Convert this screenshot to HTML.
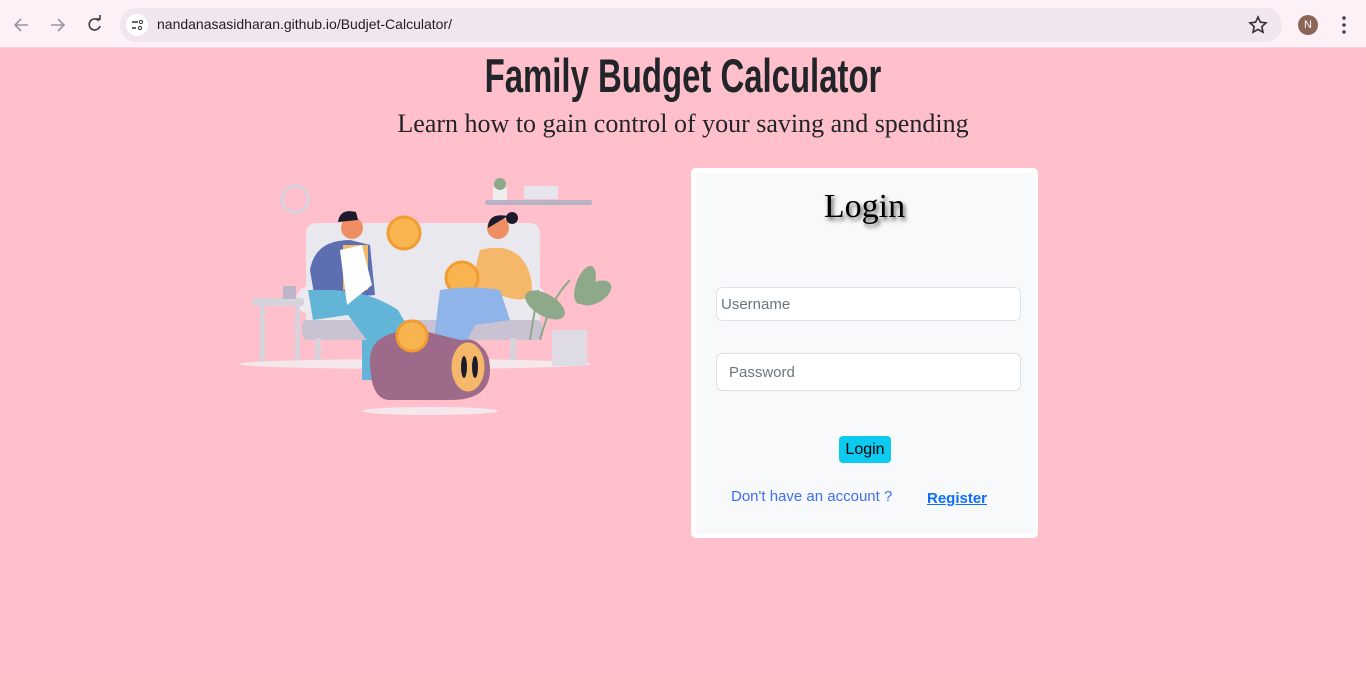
<!DOCTYPE html>
<html><head><meta charset="utf-8"><style>
*{margin:0;padding:0;box-sizing:border-box}
body{width:1366px;height:673px;overflow:hidden;background:#ffc0cb;font-family:"Liberation Sans",sans-serif;position:relative}
.bar{position:absolute;left:0;top:0;width:1366px;height:48px;background:#fdf1f7;border-bottom:1px solid #f0d6e2}
.url{position:absolute;left:120px;top:8px;width:1162px;height:34px;border-radius:17px;background:#f1e5ee}
.url span{position:absolute;left:37px;top:8px;font-size:14px;color:#1f1f1f}
h1{position:absolute;left:0;width:1366px;top:48px;text-align:center;font-family:"Liberation Sans",sans-serif;font-weight:bold;font-size:47px;color:#212529;transform:scaleX(0.7);transform-origin:683px 0}
.sub{position:absolute;left:0;width:1366px;top:109px;text-align:center;font-family:"Liberation Serif",serif;font-size:26px;color:#212529}
.card{position:absolute;left:691px;top:168px;width:347px;height:370px;background:#fff;border-radius:5px}
.in{position:absolute;left:5px;top:5px;width:337px;height:360px;background:#f8f9fa}
.lt{position:absolute;left:0;width:100%;top:15px;text-align:center;font-family:"Liberation Serif",serif;font-size:34px;color:#000;text-shadow:2px 3px 4px #555}
.inp{position:absolute;left:20px;width:305px;background:#fff;border:1px solid #dee2e6;border-radius:6px;font-size:15px;color:#6c757d}
.btn{position:absolute;left:143px;top:263px;width:52px;height:27px;background:#0dcaf0;border-radius:4px;font-size:16px;color:#000;text-align:center;line-height:27px}
.a1{position:absolute;left:35px;top:315px;font-size:15px;color:#3d6ef5}
.a2{position:absolute;left:231px;top:317px;font-size:15px;color:#0d6efd;font-weight:bold;text-decoration:underline}
</style></head><body>
<div class="bar">
<svg width="120" height="48" style="position:absolute;left:0;top:0">
<path d="M28 25H15M21 19l-6 6 6 6" stroke="#999" stroke-width="1.6" fill="none"/>
<path d="M51 25h13M58 19l6 6-6 6" stroke="#999" stroke-width="1.6" fill="none"/>
<path d="M99 21a5.5 5.5 0 1 0 1 5" stroke="#444" stroke-width="1.7" fill="none"/><path d="M96 19h4v-4" stroke="#444" stroke-width="1.7" fill="none"/>
</svg>
<div class="url"><svg width="30" height="34" style="position:absolute;left:4px;top:0"><circle cx="13" cy="17" r="11" fill="#fff"/><path d="M8 14h6M8 20h4" stroke="#333" stroke-width="1.5"/><circle cx="17" cy="14" r="1.6" stroke="#333" fill="none"/><circle cx="16" cy="20" r="1.6" stroke="#333" fill="none"/></svg><span>nandanasasidharan.github.io/Budjet-Calculator/</span>
<svg width="20" height="20" style="position:absolute;left:1128px;top:7px"><path d="M10 2l2.4 5.2 5.6.6-4.2 3.8 1.2 5.6L10 14.4 5 17.2l1.2-5.6L2 7.8l5.6-.6z" stroke="#333" stroke-width="1.6" fill="none"/></svg></div>
<div style="position:absolute;left:1298px;top:15px;width:20px;height:20px;border-radius:50%;background:#8d6556;color:#fff;font-size:11px;text-align:center;line-height:20px">N</div>
<svg width="6" height="20" style="position:absolute;left:1341px;top:15px"><circle cx="3" cy="3" r="1.8" fill="#444"/><circle cx="3" cy="10" r="1.8" fill="#444"/><circle cx="3" cy="17" r="1.8" fill="#444"/></svg>
</div>
<h1>Family Budget Calculator</h1>
<div class="sub">Learn how to gain control of your saving and spending</div>
<svg width="380" height="250" viewBox="0 0 380 250" style="position:absolute;left:240px;top:170px">
<circle cx="55" cy="29" r="13" fill="none" stroke="#d6d3dd" stroke-width="3"/>
<rect x="245" y="30" width="107" height="5" rx="2" fill="#b8b2c6"/>
<rect x="253" y="17" width="14" height="13" fill="#eee"/><circle cx="260" cy="14" r="6" fill="#8ea88a"/>
<rect x="284" y="16" width="34" height="13" fill="#e6e4ec"/>
<rect x="66" y="53" width="234" height="110" rx="10" fill="#eae8ef"/>
<rect x="62" y="150" width="240" height="20" rx="6" fill="#c9c2d3"/>
<rect x="75" y="168" width="6" height="22" fill="#d6d3dd"/><rect x="270" y="168" width="6" height="22" fill="#d6d3dd"/>
<circle cx="70" cy="130" r="14" fill="#eceaf0"/><circle cx="293" cy="130" r="14" fill="#eceaf0"/>
<rect x="12" y="128" width="52" height="8" rx="3" fill="#d6d3dd"/><rect x="20" y="136" width="5" height="60" fill="#d6d3dd"/><rect x="55" y="136" width="5" height="60" fill="#d6d3dd"/>
<rect x="43" y="116" width="13" height="13" fill="#bdb5c8"/>
<ellipse cx="175" cy="194" rx="175" ry="5" fill="#f4e8ec"/>
<ellipse cx="190" cy="241" rx="68" ry="4" fill="#f4e8ec"/>
<path d="M70 100q5-30 40-30l20 5 5 50-60 5z" fill="#5d6fb1"/>
<rect x="103" y="75" width="25" height="45" fill="#f2b869"/>
<circle cx="112" cy="58" r="11" fill="#ef8e63"/><path d="M98 52q2-14 18-10l2 8z" fill="#1d1b2b"/>
<path d="M88 120q40 0 70 20l20 35-40 10-30-40-35 5-5-30z" fill="#63b5d7"/>
<rect x="122" y="170" width="25" height="40" fill="#63b5d7"/>
<path d="M100 80l22-5 10 40-25 20z" fill="#fff"/>
<circle cx="164" cy="63" r="16" fill="#f8b44f" stroke="#f29d33" stroke-width="3"/>
<circle cx="258" cy="58" r="11" fill="#ef8e63"/><circle cx="272" cy="48" r="6" fill="#1d1b2b"/><path d="M248 58q0-16 20-12z" fill="#1d1b2b"/>
<path d="M240 80q40-10 50 25t-30 20l-30-5z" fill="#f5b86a"/>
<circle cx="222" cy="108" r="16" fill="#f8b44f" stroke="#f29d33" stroke-width="3"/>
<path d="M200 120q30-5 60 0l10 30-35 5-25 50-20-5z" fill="#8fb4ea"/>
<path d="M130 190q0-30 50-30l40 10q30 0 30 30t-40 30h-60q-20 0-20-40z" fill="#9e6a8a"/>
<circle cx="172" cy="166" r="15" fill="#f8b44f" stroke="#f29d33" stroke-width="3"/>
<ellipse cx="228" cy="197" rx="18" ry="26" fill="#f5b86a" stroke="#9e6a8a" stroke-width="3"/>
<ellipse cx="224" cy="197" rx="3" ry="11" fill="#1d1b2b"/><ellipse cx="235" cy="197" rx="3" ry="11" fill="#1d1b2b"/>
<path d="M290 170l8-50M300 170q10-40 30-60" stroke="#8ea88a" stroke-width="2" fill="none"/>
<ellipse cx="305" cy="135" rx="22" ry="11" fill="#8ea88a" transform="rotate(30 305 135)"/>
<ellipse cx="355" cy="123" rx="18" ry="10" fill="#8ea88a" transform="rotate(-30 355 123)"/>
<ellipse cx="345" cy="115" rx="9" ry="20" fill="#8ea88a" transform="rotate(20 345 115)"/>
<rect x="312" y="160" width="35" height="36" fill="#dedbe5"/>
</svg>
<div class="card"><div class="in">
<div class="lt">Login</div>
<div class="inp" style="top:114px;height:34px;padding:8px 4px;line-height:17px">Username</div>
<div class="inp" style="top:180px;height:38px;padding:10px 12px;line-height:18px">Password</div>
<div class="btn">Login</div>
<div class="a1">Don't have an account ?</div>
<div class="a2">Register</div>
</div></div>
</body></html>
